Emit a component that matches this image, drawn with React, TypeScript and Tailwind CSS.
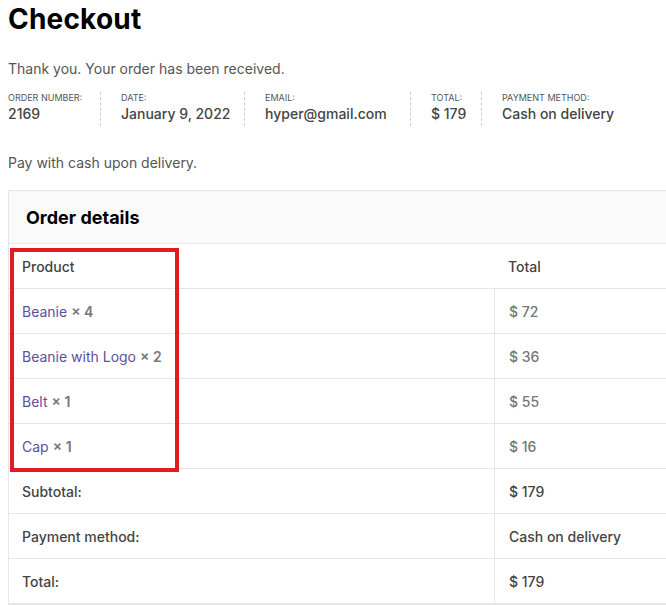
import React from 'react';

const overview = [
  { label: 'Order number:', value: '2169', w: 'w-[93px] pr-[10px]' },
  { label: 'Date:', value: 'January 9, 2022', w: 'w-[144px] px-[20px]' },
  { label: 'Email:', value: 'hyper@gmail.com', w: 'w-[166px] px-[20px]' },
  { label: 'Total:', value: '$ 179', w: 'w-[71px] px-[20px]' },
  { label: 'Payment method:', value: 'Cash on delivery', w: 'pl-[20px]' },
];

const items = [
  { name: 'Beanie', qty: 4, total: '$ 72' },
  { name: 'Beanie with Logo', qty: 2, total: '$ 36' },
  { name: 'Belt', qty: 1, total: '$ 55' },
  { name: 'Cap', qty: 1, total: '$ 16' },
];

const totals = [
  { label: 'Subtotal:', value: '$ 179' },
  { label: 'Payment method:', value: 'Cash on delivery' },
  { label: 'Total:', value: '$ 179' },
];

export default function App() {
  return (
    <div
      className="relative w-[666px] h-[606px] overflow-hidden bg-white text-[#555]"
      style={{ fontFamily: 'Inter, "Liberation Sans", sans-serif' }}
    >
      <div className="px-2">
        <h1 className="pt-[2px] text-[28px] leading-[34px] font-bold text-black tracking-[0.2px]">
          Checkout
        </h1>

        <p className="mt-[23px] text-[14px] leading-[20px] text-[#555]">
          Thank you. Your order has been received.
        </p>

        {/* order overview */}
        <ul className="mt-[13px] flex">
          {overview.map((o, i) => (
            <li
              key={o.label}
              className={`${o.w} whitespace-nowrap ${
                i < overview.length - 1 ? 'border-r border-dashed border-[#ccc]' : ''
              }`}
            >
              <div className="text-[9px] leading-[12px] uppercase text-[#555]">{o.label}</div>
              <div className="text-[14px] leading-[20px] font-medium text-[#444] pb-[2px]">
                {o.value}
              </div>
            </li>
          ))}
        </ul>

        <p className="mt-[27px] text-[14px] leading-[20px] text-[#555]">
          Pay with cash upon delivery.
        </p>

        {/* order details table */}
        <div className="mt-[17px] w-[720px] border border-[#e6e6e6]">
          <div className="h-[53px] flex items-center px-[17px] bg-[#fafafa] border-b border-[#e6e6e6]">
            <h2 className="text-[18px] font-bold text-black">Order details</h2>
          </div>
          <div className="flex h-[45px] items-center border-b border-[#e6e6e6] text-[14px] font-medium text-[#444]">
            <div className="w-[485px] px-[13px]">Product</div>
            <div className="flex-1 px-[14px]">Total</div>
          </div>
          {items.map((it) => (
            <div key={it.name} className="flex h-[45px] border-b border-[#e6e6e6] text-[14px]">
              <div className="w-[485px] px-[13px] flex items-center">
                <span className="text-[#5b519c]">{it.name}</span>
                <span className="ml-[4px] font-semibold text-[#777]">× {it.qty}</span>
              </div>
              <div className="flex-1 px-[14px] flex items-center border-l border-[#e6e6e6] font-medium text-[#777]">
                {it.total}
              </div>
            </div>
          ))}
          {totals.map((t) => (
            <div key={t.label} className="flex h-[45px] border-b border-[#e6e6e6] text-[14px] font-medium text-[#444]">
              <div className="w-[485px] px-[13px] flex items-center">{t.label}</div>
              <div className="flex-1 px-[14px] flex items-center border-l border-[#e6e6e6]">
                {t.value}
              </div>
            </div>
          ))}
        </div>
      </div>

      {/* red highlight annotation */}
      <div className="absolute left-[10px] top-[248px] w-[169px] h-[224px] border-[4px] border-[#e21b23]" />
    </div>
  );
}
